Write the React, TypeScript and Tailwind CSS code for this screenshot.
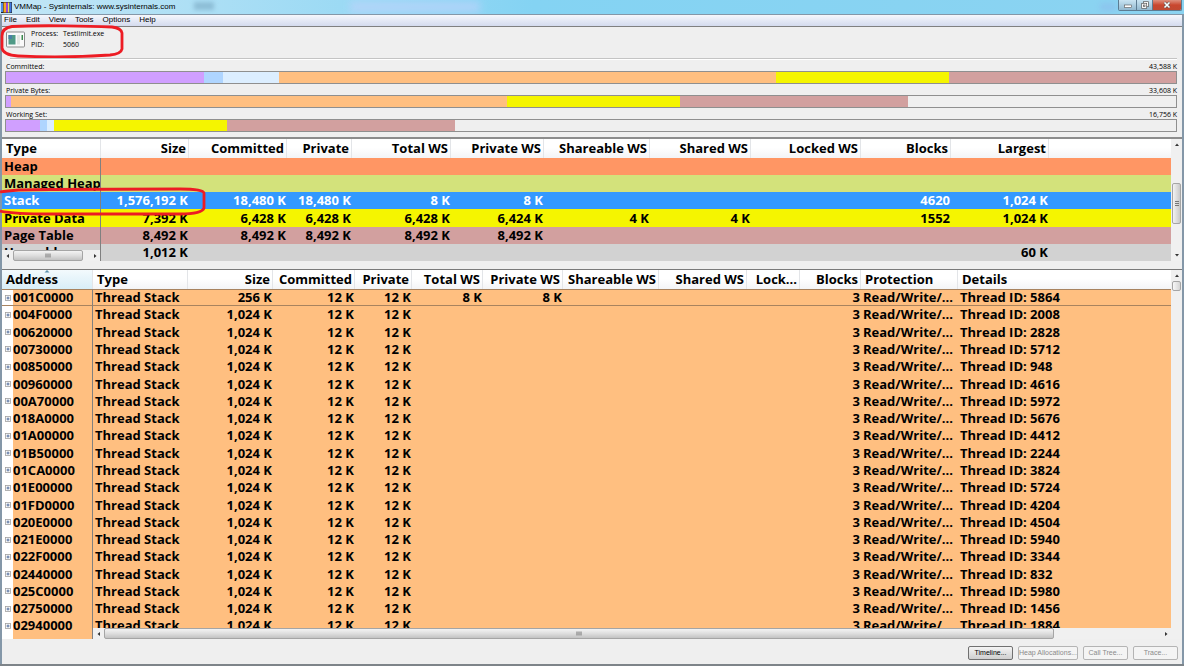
import type { ReactNode } from 'react';
import clsx from 'clsx';

interface Segment {
  color: string;
  size: number;
}

interface Column {
  title: string;
  width: string;
  left?: boolean;
}

const PURPLE = 'bg-[#d09fff]';
const BLUE = 'bg-[#afd5ff]';
const PALE = 'bg-[#dceeff]';
const ORANGE = 'bg-[#ffbf80]';
const YELLOW = 'bg-[#f5f500]';
const ROSE = 'bg-[#d2a09f]';

const usage: { label: string; total: string; segments: Segment[] }[] = [
  {
    label: 'Committed:',
    total: '43,588 K',
    segments: [
      { color: PURPLE, size: 198 },
      { color: BLUE, size: 19 },
      { color: PALE, size: 56 },
      { color: ORANGE, size: 497 },
      { color: YELLOW, size: 173 },
      { color: ROSE, size: 227 },
    ],
  },
  {
    label: 'Private Bytes:',
    total: '33,608 K',
    segments: [
      { color: PURPLE, size: 5 },
      { color: ORANGE, size: 496 },
      { color: YELLOW, size: 173 },
      { color: ROSE, size: 228 },
    ],
  },
  {
    label: 'Working Set:',
    total: '16,756 K',
    segments: [
      { color: PURPLE, size: 34 },
      { color: BLUE, size: 7 },
      { color: PALE, size: 7 },
      { color: YELLOW, size: 173 },
      { color: ROSE, size: 228 },
    ],
  },
];
const USAGE_MAX = 1170;

const summaryColumns: Column[] = [
  { title: 'Type', width: 'w-[99px]', left: true },
  { title: 'Size', width: 'w-[88px]' },
  { title: 'Committed', width: 'w-[98px]' },
  { title: 'Private', width: 'w-[65px]' },
  { title: 'Total WS', width: 'w-[99px]' },
  { title: 'Private WS', width: 'w-[93px]' },
  { title: 'Shareable WS', width: 'w-[106px]' },
  { title: 'Shared WS', width: 'w-[101px]' },
  { title: 'Locked WS', width: 'w-[110px]' },
  { title: 'Blocks', width: 'w-[90px]' },
  { title: 'Largest', width: 'w-[98px]' },
];

const summaryRows = [
  { color: 'bg-[#ff9664]', cells: ['Heap', '', '', '', '', '', '', '', '', '', ''] },
  { color: 'bg-[#d3e27b]', cells: ['Managed Heap', '', '', '', '', '', '', '', '', '', ''] },
  {
    color: 'bg-[#3399ff] text-white',
    cells: ['Stack', '1,576,192 K', '18,480 K', '18,480 K', '8 K', '8 K', '', '', '', '4620', '1,024 K'],
  },
  {
    color: YELLOW,
    cells: ['Private Data', '7,392 K', '6,428 K', '6,428 K', '6,428 K', '6,424 K', '4 K', '4 K', '', '1552', '1,024 K'],
  },
  { color: ROSE, cells: ['Page Table', '8,492 K', '8,492 K', '8,492 K', '8,492 K', '8,492 K', '', '', '', '', ''] },
  { color: 'bg-[#d2d2d2]', cells: ['Unusable', '1,012 K', '', '', '', '', '', '', '', '', '60 K'] },
];

const detailColumns: Column[] = [
  { title: 'Address', width: 'w-[91px]', left: true },
  { title: 'Type', width: 'w-[95px]', left: true },
  { title: 'Size', width: 'w-[85px]' },
  { title: 'Committed', width: 'w-[82px]' },
  { title: 'Private', width: 'w-[57px]' },
  { title: 'Total WS', width: 'w-[71px]' },
  { title: 'Private WS', width: 'w-[80px]' },
  { title: 'Shareable WS', width: 'w-[96px]' },
  { title: 'Shared WS', width: 'w-[88px]' },
  { title: 'Lock...', width: 'w-[53px]' },
  { title: 'Blocks', width: 'w-[61px]' },
  { title: 'Protection', width: 'w-[97px]', left: true },
];

const threads: [string, string][] = [
  ['001C0000', '5864'],
  ['004F0000', '2008'],
  ['00620000', '2828'],
  ['00730000', '5712'],
  ['00850000', '948'],
  ['00960000', '4616'],
  ['00A70000', '5972'],
  ['018A0000', '5676'],
  ['01A00000', '4412'],
  ['01B50000', '2244'],
  ['01CA0000', '3824'],
  ['01E00000', '5724'],
  ['01FD0000', '4204'],
  ['020E0000', '4504'],
  ['021E0000', '5940'],
  ['022F0000', '3344'],
  ['02440000', '832'],
  ['025C0000', '5980'],
  ['02750000', '1456'],
  ['02940000', '1884'],
  ['02A00000', '2516'],
];

const menus = ['File', 'Edit', 'View', 'Tools', 'Options', 'Help'];

function Arrow({ d }: { d: string }) {
  return (
    <svg viewBox="0 0 6 6" className="h-[6px] w-[6px]" fill="#333">
      <path d={d} />
    </svg>
  );
}

function VerticalScroll({ children }: { children: ReactNode }) {
  return (
    <div className="flex w-[11px] shrink-0 flex-col items-center bg-[#f0f0f0]">
      <button aria-label="Scroll up" className="flex h-[11px] w-full items-center justify-center">
        <Arrow d="M3 1.5 L5 4 H1 Z" />
      </button>
      {children}
      <button aria-label="Scroll down" className="mt-auto flex h-[12px] w-full items-center justify-center">
        <Arrow d="M1 2 H5 L3 4.5 Z" />
      </button>
    </div>
  );
}

function Grip({ vertical }: { vertical?: boolean }) {
  return (
    <svg viewBox="0 0 6 5" className={clsx('h-[5px] w-[6px]', vertical && 'rotate-90')} stroke="#777">
      <path d="M1 0.5 V4.5 M3 0.5 V4.5 M5 0.5 V4.5" />
    </svg>
  );
}

function HorizontalScroll({ className, thumb }: { className: string; thumb: string }) {
  return (
    <div className={clsx('absolute flex items-stretch bg-[#f0f0f0]', className)}>
      <button aria-label="Scroll left" className="flex w-[11px] items-center justify-center">
        <Arrow d="M4 1 V5 L1.5 3 Z" />
      </button>
      <div className="flex flex-1">
        <div
          className={clsx(
            'flex items-center justify-center rounded-xs border border-[#a5a5a5] bg-linear-to-b from-[#f3f3f3] via-[#dedede] to-[#c3c3c3]',
            thumb,
          )}
        >
          <Grip />
        </div>
      </div>
      <button aria-label="Scroll right" className="flex w-[11px] items-center justify-center">
        <Arrow d="M2 1 V5 L4.5 3 Z" />
      </button>
    </div>
  );
}

function TitleBar() {
  return (
    <div className="relative flex h-[14px] items-start overflow-hidden bg-linear-to-r from-[#c3e6f6] via-[#84d3f3] via-45% to-[#8bd3f1]">
      <div className="absolute top-[2px] left-[194px] h-[8px] w-[20px] bg-[#6f9db8] opacity-50 blur-[2px]" />
      <div className="absolute top-[2px] left-[350px] h-[10px] w-[130px] bg-[#bcd3fb] opacity-80 blur-[4px]" />
      <div className="absolute top-[4px] right-[68px] h-[6px] w-[16px] bg-[#8fb4ea] opacity-60 blur-[3px]" />
      <svg viewBox="0 0 11 11" className="relative mt-[2px] ml-px h-[11px] w-[11px]">
        <rect width="11" height="11" fill="#222" />
        <rect x="0" y="1" width="2" height="9" fill="#4f8be8" />
        <rect x="2.500" y="0.500" width="2.500" height="10" fill="#f5a623" />
        <rect x="5" y="0.500" width="2" height="10" fill="#9a46d8" />
        <rect x="7" y="0.500" width="1.500" height="10" fill="#f4e04a" />
        <rect x="8.500" y="0.500" width="2" height="10" fill="#3f78e0" />
      </svg>
      <h1 className="relative ml-[2px] font-['Liberation_Sans',sans-serif] text-[8px] leading-[14px] text-black">
        VMMap - Sysinternals: www.sysinternals.com
      </h1>
      <div className="relative mr-[2px] ml-auto flex h-[11px] overflow-hidden rounded-b-xs border border-t-0 border-[#5c7c92]">
        <button aria-label="Minimize" className="flex w-[17px] items-center justify-center bg-linear-to-b from-[#c9e4f2] to-[#92b9d0]">
          <svg viewBox="0 0 8 8" className="h-2 w-2">
            <rect x="0.500" y="4" width="7" height="2.500" fill="#fff" stroke="#555" strokeWidth="0.600" />
          </svg>
        </button>
        <button
          aria-label="Restore"
          className="flex w-[17px] items-center justify-center border-x border-[#5c7c92] bg-linear-to-b from-[#c9e4f2] to-[#92b9d0]"
        >
          <svg viewBox="0 0 8 8" className="h-2 w-2" fill="#fff" stroke="#555" strokeWidth="0.700">
            <rect x="2.500" y="0.700" width="5" height="5" />
            <rect x="0.700" y="2.300" width="5" height="5" />
            <rect x="2.500" y="4" width="1.500" height="1.500" />
          </svg>
        </button>
        <button aria-label="Close" className="flex w-[28px] items-center justify-center bg-linear-to-b from-[#dd8f7d] via-[#c9472f] to-[#c04a32]">
          <svg viewBox="0 0 8 8" className="h-2 w-2">
            <path d="M1.500 1.500 L6.500 6.500 M6.500 1.500 L1.500 6.500" stroke="#555" strokeWidth="2.600" />
            <path d="M1.500 1.500 L6.500 6.500 M6.500 1.500 L1.500 6.500" stroke="#fff" strokeWidth="1.600" />
          </svg>
        </button>
      </div>
    </div>
  );
}

function ProcessHeader() {
  return (
    <div className="relative flex h-[31px] items-start pl-[4px]">
      <svg viewBox="0 0 20 17" className="mt-[4px] h-[17px] w-[20px]">
        <rect x="0.500" y="1" width="18" height="15" rx="1" fill="#fafafa" stroke="#8d8d8d" />
        <rect x="2.500" y="4" width="7" height="9.500" fill="#4f9a86" />
        <rect x="2.500" y="4" width="3.500" height="4" fill="#4a7fa5" />
        <rect x="11" y="4" width="3" height="9.500" fill="#e2e6e2" />
        <rect x="15.500" y="4" width="1.500" height="5" fill="#3b8a4d" />
      </svg>
      <dl className="mt-px ml-[5px] grid grid-cols-[32px_auto] text-[7px] leading-[11px]">
        <dt>Process:</dt>
        <dd>Testlimit.exe</dd>
        <dt>PID:</dt>
        <dd>5060</dd>
      </dl>
      <svg viewBox="0 0 124 34" className="absolute -top-[3px] -left-[2px] z-10 h-[34px] w-[124px]" fill="none" stroke="#ed1c24" strokeWidth="2.800">
        <path d="M12 2.500 C40 1 90 2 112 3 Q121 4 122 9 L122 25 Q121 30 110 31 C80 33 40 33 18 32 Q3 31 2 24 L2 12 Q2 4 12 2.500 Z" />
      </svg>
    </div>
  );
}

function UsageBar({ label, total, segments }: { label: string; total: string; segments: Segment[] }) {
  return (
    <div>
      <div className="flex h-[11px] items-start justify-between pl-px text-[7px] leading-[13px]">
        <span>{label}</span>
        <span>{total}</span>
      </div>
      <div className="flex h-[13px] border border-[#8f8f8f]">
        {segments.map((s, i) => (
          <div key={i} className={s.color} style={{ width: `${(s.size / USAGE_MAX) * 100}%` }} />
        ))}
      </div>
    </div>
  );
}

function HeaderCell({ column, sorted }: { column: Column; sorted?: boolean }) {
  return (
    <th
      scope="col"
      className={clsx(
        'relative overflow-hidden border-r border-[#e3e5e8] p-0 font-bold whitespace-nowrap',
        column.left ? 'pl-[4px] text-left' : 'pr-[2px] text-right',
        sorted ? 'bg-linear-to-b from-[#f3fafd] to-[#d8eef8]' : 'bg-linear-to-b from-white from-45% to-[#f3f4f6]',
      )}
    >
      {sorted && (
        <svg viewBox="0 0 6 3" className="absolute top-0 left-[42px] h-[3px] w-[6px]" fill="#5c91ad">
          <path d="M3 0 L5.500 2.500 H0.500 Z" />
        </svg>
      )}
      {column.title}
    </th>
  );
}

function SummaryTable() {
  return (
    <section className="relative flex h-[124px] shrink-0 overflow-hidden border-t-2 border-[#8c8c8c] bg-white">
      <div className="min-w-0 flex-1">
        <table className="h-[122px] w-full table-fixed border-separate border-spacing-0 text-[13px] leading-[17px]">
          <colgroup>
            {summaryColumns.map((c) => (
              <col key={c.title} className={c.width} />
            ))}
            <col />
          </colgroup>
          <thead>
            <tr className="h-[19px]">
              {summaryColumns.map((c) => (
                <HeaderCell key={c.title} column={c} />
              ))}
              <th className="bg-linear-to-b from-white from-45% to-[#f3f4f6]" />
            </tr>
          </thead>
          <tbody className="font-bold">
            {summaryRows.map((row) => (
              <tr key={row.cells[0]} className={row.color}>
                {row.cells.map((cell, i) => (
                  <td
                    key={i}
                    className={clsx(
                      'overflow-hidden p-0 whitespace-nowrap',
                      i === 0 ? 'border-r border-[#808080] pl-[2px]' : 'pr-px text-right',
                    )}
                  >
                    {cell}
                  </td>
                ))}
                <td className="p-0" />
              </tr>
            ))}
          </tbody>
        </table>
      </div>
      <VerticalScroll>
        <div className="mt-[33px] flex h-[41px] w-[9px] items-center justify-center rounded-xs border border-[#a5a5a5] bg-linear-to-r from-[#f3f3f3] to-[#c9c9c9]">
          <Grip vertical />
        </div>
      </VerticalScroll>
      <HorizontalScroll className="bottom-0 left-0 h-[11px] w-[98px]" thumb="w-[70px]" />
    </section>
  );
}

function DetailTable() {
  return (
    <section className="relative flex min-h-0 flex-1 overflow-hidden border-t border-[#7a7a7a] bg-white">
      <div className="min-w-0 flex-1">
        <table className="h-[382px] w-full table-fixed border-separate border-spacing-0 text-[13px] leading-[17px]">
          <colgroup>
            {detailColumns.map((c) => (
              <col key={c.title} className={c.width} />
            ))}
            <col />
          </colgroup>
          <thead>
            <tr className="h-[19px]">
              {detailColumns.map((c, i) => (
                <HeaderCell key={c.title} column={c} sorted={i === 0} />
              ))}
              <th scope="col" className="bg-linear-to-b from-white from-45% to-[#f3f4f6] p-0 pl-[4px] text-left font-bold">
                Details
              </th>
            </tr>
          </thead>
          <tbody className="font-bold">
            {threads.map(([address, id], i) => {
              const first = i === 0;
              const cells = [
                'Thread Stack',
                first ? '256 K' : '1,024 K',
                '12 K',
                '12 K',
                first ? '8 K' : '',
                first ? '8 K' : '',
                '',
                '',
                '',
                '3',
                'Read/Write/...',
                `Thread ID: ${id}`,
              ];
              const line = first && 'border-y border-y-[#a8835f] leading-[15px]';
              return (
                <tr key={address}>
                  <td className={clsx('border-r border-r-[#808080] bg-[linear-gradient(to_right,white_11px,#ffbf80_11px)] p-0', line)}>
                    <div className="flex items-stretch">
                      <span className="flex w-[11px] items-center justify-center">
                        <button aria-label={`Expand ${address}`} className="flex">
                          <svg viewBox="0 0 6 6" className="h-[6px] w-[6px]">
                            <rect x="0.500" y="0.500" width="5" height="5" fill="#f8f8f8" stroke="#a0a0a0" strokeWidth="0.800" />
                            <path d="M1.500 3 H4.500 M3 1.500 V4.500" stroke="#35558f" strokeWidth="0.800" />
                          </svg>
                        </button>
                      </span>
                      <span>{address}</span>
                    </div>
                  </td>
                  {cells.map((cell, j) => {
                    const left = j === 0 || j > 9;
                    return (
                      <td
                        key={j}
                        className={clsx('overflow-hidden p-0 whitespace-nowrap', ORANGE, line, left ? 'pl-[2px]' : 'pr-px text-right')}
                      >
                        {cell}
                      </td>
                    );
                  })}
                </tr>
              );
            })}
          </tbody>
        </table>
      </div>
      <VerticalScroll>
        <div className="h-[10px] w-[9px] rounded-xs border border-[#a5a5a5] bg-linear-to-r from-[#f8f8f8] to-[#d5d5d5]" />
        <div className="mb-[10px] flex-1" />
      </VerticalScroll>
      <HorizontalScroll className="right-0 bottom-0 left-[91px] h-[11px] pr-[11px]" thumb="w-[90%]" />
    </section>
  );
}

function FooterButton({ children, width, disabled }: { children: ReactNode; width: string; disabled?: boolean }) {
  return (
    <button
      disabled={disabled}
      className={clsx(
        "h-[14px] rounded-xs border font-['Liberation_Sans',sans-serif] text-[7px] leading-[12px] whitespace-nowrap",
        width,
        disabled
          ? 'border-[#b4b4b4] bg-[#f4f4f4] text-[#8a8a8a]'
          : 'border-[#707070] bg-linear-to-b from-[#f4f4f4] to-[#cfcfcf] text-black',
      )}
    >
      {children}
    </button>
  );
}

export default function App() {
  return (
    <div className="flex h-screen flex-col overflow-hidden border-b-2 border-[#7e8489] bg-[#efefef] font-['Open_Sans','Noto_Sans',sans-serif] text-black">
      <TitleBar />
      <div className="flex min-h-0 flex-1 flex-col border-x-2 border-t border-[#8497a8]">
        <nav className="flex h-[12px] shrink-0 items-start gap-[9px] border-b border-[#808080] bg-linear-to-b from-[#f5f7fc] to-[#d4dbee] pl-[2px] font-['Liberation_Sans',sans-serif] text-[8px] leading-[10px]">
          {menus.map((m) => (
            <button key={m}>{m}</button>
          ))}
        </nav>
        <ProcessHeader />
        <div className="mr-[5px] ml-[8px] border-t border-b border-t-[#c4c4c4] border-b-white" />
        <div className="pr-[5px] pb-[5px] pl-[3px]">
          {usage.map((u) => (
            <UsageBar key={u.label} {...u} />
          ))}
        </div>
        <div className="relative">
          <SummaryTable />
          <svg viewBox="0 0 208 30" className="absolute top-[50px] -left-[2px] z-10 h-[30px] w-[208px]" fill="none" stroke="#ed1c24" strokeWidth="2.800">
            <path d="M0 5 C10 3 20 2.500 50 2.500 L180 2 Q203 2 204 6 L204 21 Q202 27 180 27 L50 27 Q15 27 0 24" />
          </svg>
        </div>
        <div className="h-[8px] shrink-0" />
        <DetailTable />
        <footer className="flex h-[25px] shrink-0 items-center justify-end gap-[5px] pt-[2px] pr-[4px]">
          <FooterButton width="w-[45px]">Timeline...</FooterButton>
          <FooterButton width="w-[60px]" disabled>
            Heap Allocations...
          </FooterButton>
          <FooterButton width="w-[45px]" disabled>
            Call Tree...
          </FooterButton>
          <FooterButton width="w-[45px]" disabled>
            Trace...
          </FooterButton>
        </footer>
      </div>
    </div>
  );
}
